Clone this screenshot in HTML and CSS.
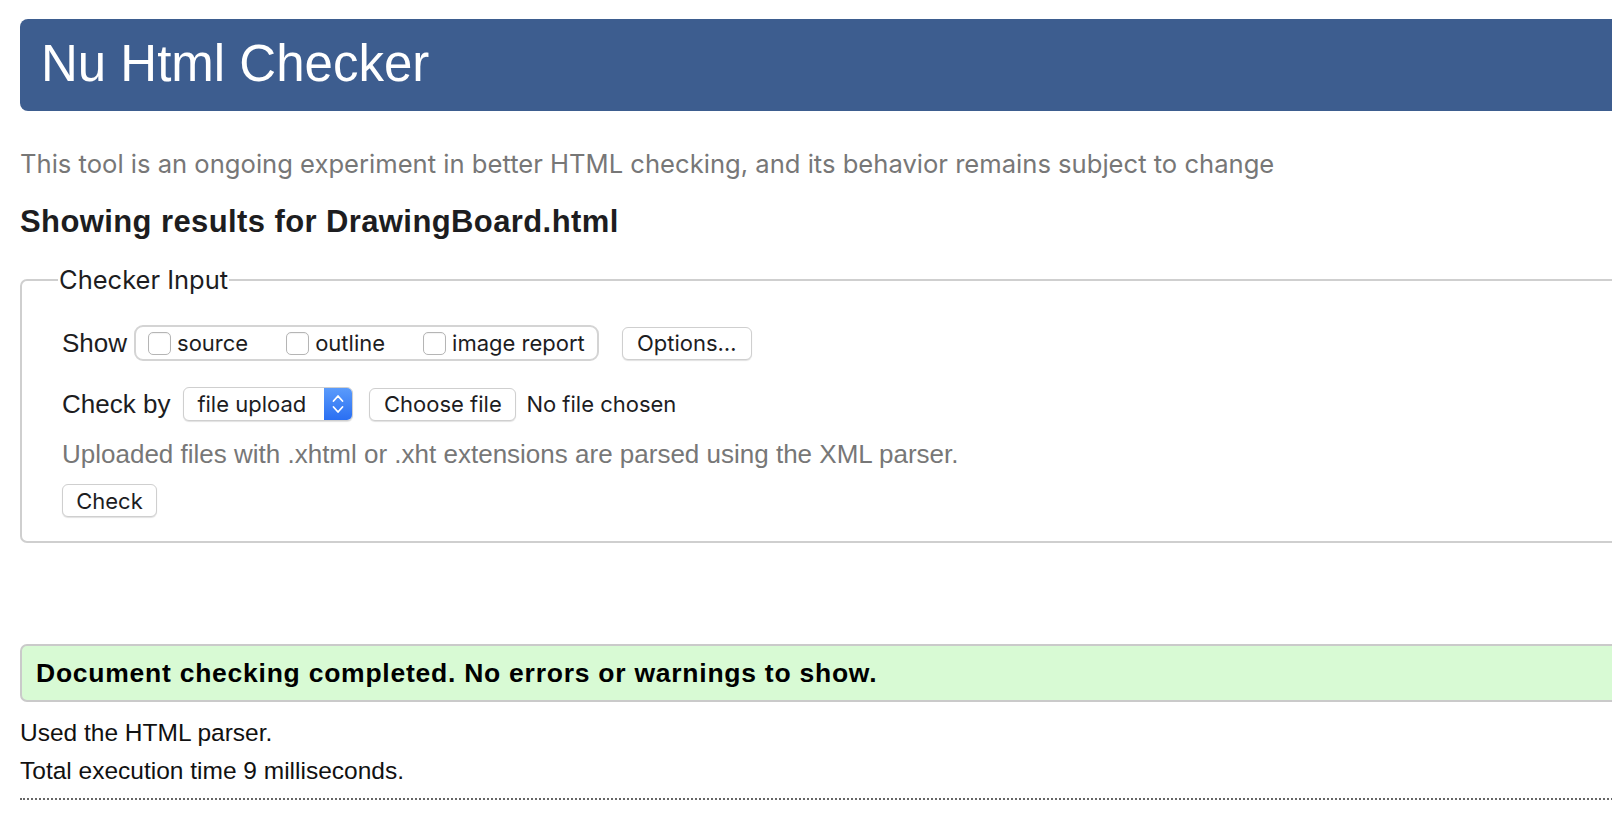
FILE: index.html
```html
<!DOCTYPE html>
<html lang="en">
<head>
<meta charset="utf-8">
<title>Nu Html Checker</title>
<link rel="stylesheet" href="styles.css">
</head>
<body>
<div class="page">
  <header class="banner"><h1 class="banner-title">Nu Html Checker</h1></header>
  <p class="intro">This tool is an ongoing experiment in better HTML checking, and its behavior remains subject to change</p>
  <h2 class="results-title">Showing results for DrawingBoard.html</h2>

  <fieldset class="checker">
    <legend class="checker-legend">Checker Input</legend>
    <div class="row show-row">
      <span class="row-label">Show</span>
      <div class="show-group">
        <label class="opt"><span class="box"></span>source</label>
        <label class="opt"><span class="box"></span>outline</label>
        <label class="opt"><span class="box"></span>image report</label>
      </div>
      <span class="btn btn-options">Options…</span>
    </div>
    <div class="row by-row">
      <span class="row-label">Check by</span>
      <span class="select">
        <span class="select-text">file upload</span>
        <span class="select-arrows">
          <svg width="14" height="26" viewBox="0 0 14 26"><path d="M2.5 10 L7 5 L11.5 10" fill="none" stroke="#fff" stroke-width="1.8" stroke-linecap="round" stroke-linejoin="round"/><path d="M2.5 16 L7 21 L11.5 16" fill="none" stroke="#fff" stroke-width="1.8" stroke-linecap="round" stroke-linejoin="round"/></svg>
        </span>
      </span>
      <span class="btn btn-file">Choose file</span>
      <span class="file-status">No file chosen</span>
    </div>
    <p class="note">Uploaded files with .xhtml or .xht extensions are parsed using the XML parser.</p>
    <span class="btn btn-check">Check</span>
  </fieldset>

  <div class="success"><p class="success-text">Document checking completed. No errors or warnings to show.</p></div>
  <p class="meta meta-first">Used the HTML parser.</p>
  <p class="meta">Total execution time 9 milliseconds.</p>
  <hr class="rule">
</div>
</body>
</html>
```

FILE: styles.css
```css
html, body {
  margin: 0;
  padding: 0;
  overflow: hidden;
  background: #fff;
}
body {
  font-family: "Liberation Sans", Arial, sans-serif;
  color: #1d1d1f;
}
.page {
  padding: 19px 0 0 20px;
  margin-right: -60px;
}
.banner {
  background: #3d5d8f;
  border-radius: 8px 0 0 8px;
  height: 92px;
  display: flex;
  align-items: center;
  padding-left: 21px;
}
.banner-title {
  margin: 0;
  color: #fff;
  font-weight: normal;
  font-size: 51px;
  line-height: 1;
  padding-bottom: 4px;
}
.intro {
  margin: 38px 0 0 0;
  color: #777;
  font-size: 25.6px;
  line-height: 30px;
  font-family: "Inter", "Liberation Sans", sans-serif;
}
.results-title {
  margin: 28px 0 0 0;
  font-size: 31px;
  letter-spacing: 0.4px;
  line-height: 30px;
  font-weight: bold;
  color: #1d1d20;
}
.checker {
  margin: 28px 0 0 0;
  border: 2px solid #cfcfcf;
  border-radius: 7px 0 0 7px;
  padding: 14px 0 24px 40px;
  min-width: 0;
}
.checker-legend {
  font-family: "Inter", "Liberation Sans", sans-serif;
  font-size: 25.5px;
  padding: 0 1px;
  margin-left: -4px;
  color: #1d1d1f;
  line-height: 30px;
}
.row {
  display: flex;
  align-items: center;
}
.row-label {
  font-size: 26px;
  color: #1d1d1f;
}
.show-group {
  margin-left: 7px;
  display: flex;
  align-items: center;
  height: 36px;
  border: 2px solid #d4d4d4;
  border-radius: 9px;
  padding: 0 12px;
  box-sizing: border-box;
}
.opt {
  display: flex;
  align-items: center;
  font-family: "Inter", "Liberation Sans", sans-serif;
  font-size: 22px;
  color: #1d1d1f;
  margin-right: 38px;
}
.opt:last-child { margin-right: 0; }
.box {
  width: 21px;
  height: 21px;
  border: 1px solid #b5b5b5;
  border-radius: 5px;
  background: #fff;
  margin-right: 6px;
  box-shadow: inset 0 1px 1px rgba(0,0,0,0.05);
}
.btn {
  display: inline-flex;
  align-items: center;
  justify-content: center;
  box-sizing: border-box;
  height: 33px;
  background: #fff;
  border: 1px solid #cfcfcf;
  border-radius: 6px;
  box-shadow: 0 1px 1px rgba(0,0,0,0.12);
  font-family: "Inter", "Liberation Sans", sans-serif;
  font-size: 22px;
  color: #1d1d1f;
}
.btn-options {
  margin-left: 23px;
  width: 130px;
}
.show-row { margin-top: 16px; }
.by-row { margin-top: 26px; }
.select {
  margin-left: 13px;
  display: inline-flex;
  align-items: stretch;
  height: 34px;
  width: 170px;
  box-sizing: border-box;
  border: 1px solid #cfcfcf;
  border-radius: 6px;
  box-shadow: 0 1px 1px rgba(0,0,0,0.12);
  overflow: hidden;
  background: #fff;
}
.select-text {
  flex: 1;
  display: flex;
  align-items: center;
  padding-left: 13px;
  font-family: "Inter", "Liberation Sans", sans-serif;
  font-size: 22px;
  color: #1d1d1f;
}
.select-arrows {
  width: 28px;
  display: flex;
  align-items: center;
  justify-content: center;
  background: linear-gradient(#5a9bfb, #2a6ff2);
}
.btn-file {
  margin-left: 16px;
  width: 147px;
}
.file-status {
  margin-left: 10px;
  font-family: "Inter", "Liberation Sans", sans-serif;
  font-size: 22px;
  color: #1d1d1f;
}
.note {
  margin: 18px 0 0 0;
  font-size: 26px;
  line-height: 30px;
  color: #777;
}
.btn-check {
  margin-top: 15px;
  width: 95px;
}
.success {
  margin-top: 101px;
  height: 58px;
  box-sizing: border-box;
  background: #d8fad4;
  border: 2px solid #cacaca;
  border-radius: 7px 0 0 7px;
  display: flex;
  align-items: center;
  padding-left: 14px;
}
.success-text {
  margin: 0;
  font-size: 26.5px;
  letter-spacing: 0.75px;
  font-weight: bold;
  color: #000;
}
.meta {
  margin: 0;
  font-size: 24.5px;
  line-height: 38px;
  color: #111;
}
.meta-first { margin-top: 12px; }
.rule {
  margin: 8px 0 0 0;
  border: 0;
  border-top: 2px dotted #666;
  height: 0;
}
```
